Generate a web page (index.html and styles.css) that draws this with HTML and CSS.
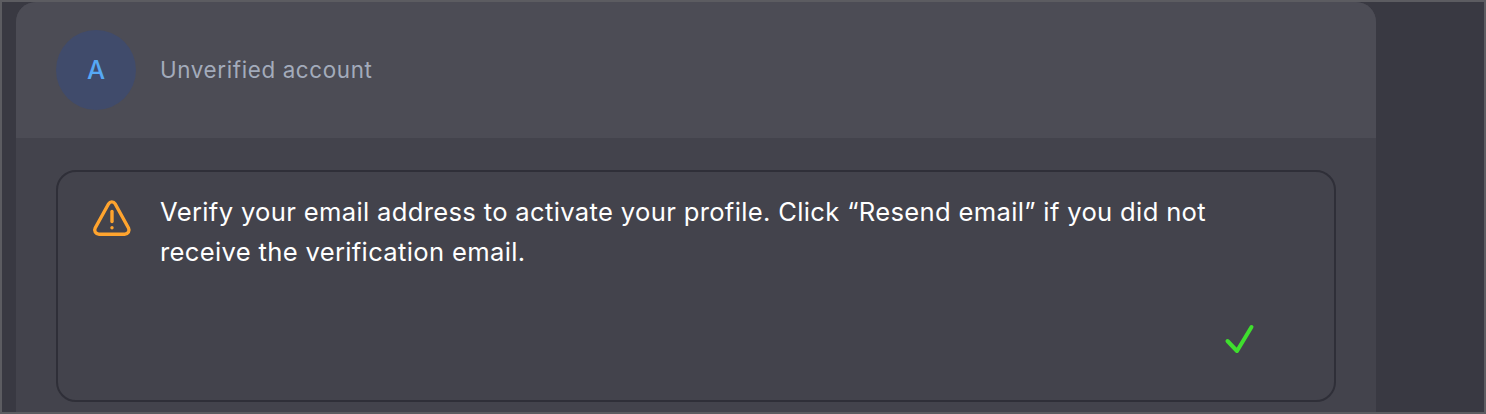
FILE: index.html
```html
<!DOCTYPE html>
<html lang="en">
<head>
<meta charset="utf-8">
<title>Unverified account</title>
<link rel="stylesheet" href="styles.css">
</head>
<body>
<div class="frame">
  <main class="card">
    <header class="card-header">
      <div class="avatar">A</div>
      <span class="account">Unverified account</span>
    </header>
    <section class="card-body">
      <div class="notice">
        <div class="notice-row">
          <svg class="warn" viewBox="0 0 42 38" width="42" height="38" fill="none" stroke="#ffa42e" stroke-width="3.4" stroke-linecap="round" stroke-linejoin="round" aria-hidden="true">
            <path d="M18.600 4.800 5.200 29C3.700 32 5.600 35.200 9 35.200H34.700C38.100 35.200 40 32 38.500 29L25.100 4.800C23.600 2.200 20.100 2.200 18.600 4.800Z"/>
            <path d="M22 12.500V22.500"/>
            <path d="M22 28.700V28.800"/>
          </svg>
          <p class="message">Verify your email address to activate your profile. Click “Resend email” if you did not receive the verification email.</p>
        </div>
        <div class="notice-status">
          <svg class="check" viewBox="0 0 32 32" width="32" height="32" fill="none" stroke="#3fdf2e" stroke-width="4" stroke-linecap="round" stroke-linejoin="round" aria-hidden="true">
            <path d="M3.500 17 13 27 27.500 3"/>
          </svg>
        </div>
      </div>
    </section>
  </main>
</div>
</body>
</html>
```

FILE: styles.css
```css
* { box-sizing: border-box; }
html, body { margin: 0; height: 100%; overflow: hidden; }
body { font-family: Inter, "Liberation Sans", sans-serif; background: #393942; }
.frame {
  height: 414px;
  border: 2px solid #5c5c61;
  padding-left: 14px;
  overflow: hidden;
  background: #393942;
}
.card {
  width: 1360px;
  height: 500px;
  background: #43434c;
  border-radius: 20px 20px 0 0;
  overflow: hidden;
}
.card-header {
  height: 136px;
  padding: 28px 40px;
  display: flex;
  align-items: center;
  gap: 24px;
  background: #4c4c55;
}
.avatar {
  width: 80px;
  height: 80px;
  border-radius: 50%;
  background: #404b6b;
  color: #56a8f5;
  font-size: 25.6px;
  font-weight: 500;
  padding-bottom: 2px;
  display: flex;
  align-items: center;
  justify-content: center;
}
.account {
  font-size: 22.4px;
  letter-spacing: 0.63px;
  color: #a3abbb;
  margin-bottom: 2px;
}
.card-body { padding: 32px 40px; }
.notice {
  height: 232px;
  border: 2px solid #2f2f38;
  border-radius: 20px;
  padding: 20px 32px;
}
.notice-row { display: flex; gap: 28px; }
.warn { flex: none; margin-top: 7px; }
.message {
  margin: 0;
  font-size: 25.6px;
  line-height: 40px;
  letter-spacing: 0.33px;
  color: #fff;
  max-width: 1080px;
}
.notice-status {
  display: flex;
  justify-content: flex-end;
  padding: 52px 46px 0 0;
}
.check { display: block; }
```
